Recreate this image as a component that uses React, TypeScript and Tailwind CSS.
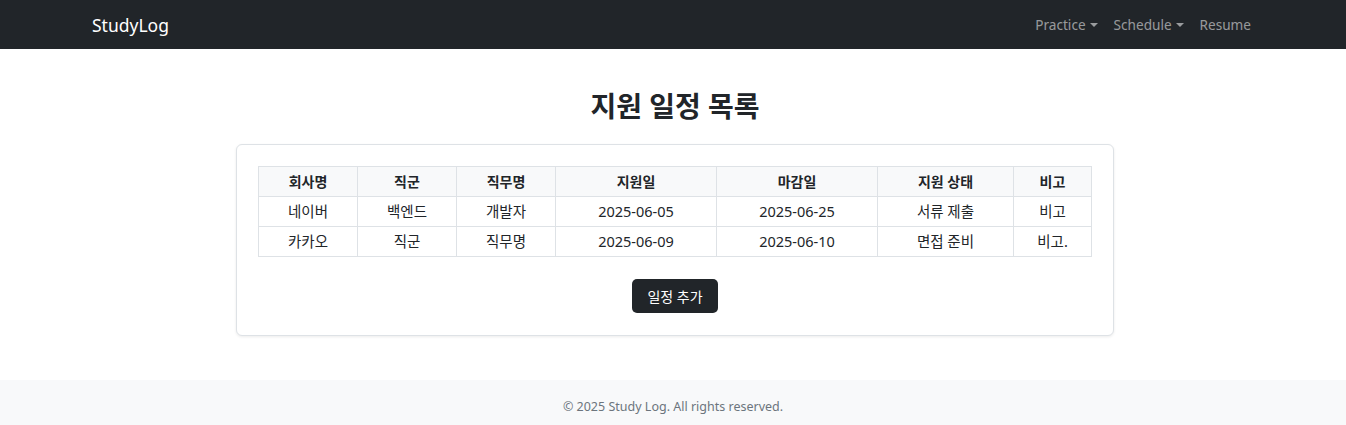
const FONT = '[font-family:"Noto_Sans","Noto_Sans_CJK_KR",sans-serif]';

const ROWS = [
  { company: '네이버', group: '백엔드', title: '개발자', applied: '2025-06-05', due: '2025-06-25', status: '서류 제출', note: '비고' },
  { company: '카카오', group: '직군', title: '직무명', applied: '2025-06-09', due: '2025-06-10', status: '면접 준비', note: '비고.' },
];

const COLS = [
  { label: '회사명', w: 'w-[99px]' },
  { label: '직군', w: 'w-[99px]' },
  { label: '직무명', w: 'w-[99px]' },
  { label: '지원일', w: 'w-[161px]' },
  { label: '마감일', w: 'w-[161px]' },
  { label: '지원 상태', w: 'w-[136px]' },
  { label: '비고', w: 'w-[78px]' },
];

function Caret() {
  return (
    <span className="ml-[4px] inline-block h-0 w-0 border-x-[4.5px] border-t-[4.5px] border-x-transparent border-t-current align-[3px]" />
  );
}

export default function App() {
  return (
    <div className={`min-h-screen bg-white text-[#212529] ${FONT}`}>
      <nav className="flex h-[49px] items-center justify-between bg-[#212529] pl-[92px] pr-[87px] pt-[2px]">
        <span className="text-[17.5px] text-white">StudyLog</span>
        <div className="flex items-center text-[13.6px] text-[#ffffff8c]">
          <span className="px-[8px] pl-[4px]">Practice<Caret /></span>
          <span className="px-[8px]">Schedule<Caret /></span>
          <span className="px-[8px]">Resume</span>
        </div>
      </nav>

      <main className="flex flex-col items-center pb-[44px] pl-[4px]">
        <h3 className="mt-[40px] mb-[21px] text-[28px] font-bold leading-[34px]">지원 일정 목록</h3>

        <div className="w-[878px] rounded-[6px] border border-[#dee2e6] bg-white p-[21px] pb-[22px] shadow-[0_1px_3px_rgba(0,0,0,0.08)]">
          <table className="w-[834px] border-collapse text-center text-[14px]">
            <thead>
              <tr className="bg-[#f8f9fa]">
                {COLS.map(c => (
                  <th key={c.label} className={`${c.w} h-[30px] border border-[#dee2e6] p-0 font-bold`}>
                    {c.label}
                  </th>
                ))}
              </tr>
            </thead>
            <tbody>
              {ROWS.map(r => (
                <tr key={r.company}>
                  {[r.company, r.group, r.title, r.applied, r.due, r.status, r.note].map((v, i) => (
                    <td key={i} className="h-[30px] border border-[#dee2e6] p-0 text-[14.5px]">{v}</td>
                  ))}
                </tr>
              ))}
            </tbody>
          </table>

          <div className="mt-[22px] flex justify-center">
            <button className="h-[34px] rounded-[5px] bg-[#212529] px-[15px] text-[14px] text-white">
              일정 추가
            </button>
          </div>
        </div>
      </main>

      <footer className="flex h-[46px] items-start justify-center bg-[#f8f9fa] pt-[18px] text-[12.5px] text-[#6c757d]">
        © 2025 Study Log. All rights reserved.
      </footer>
    </div>
  );
}
